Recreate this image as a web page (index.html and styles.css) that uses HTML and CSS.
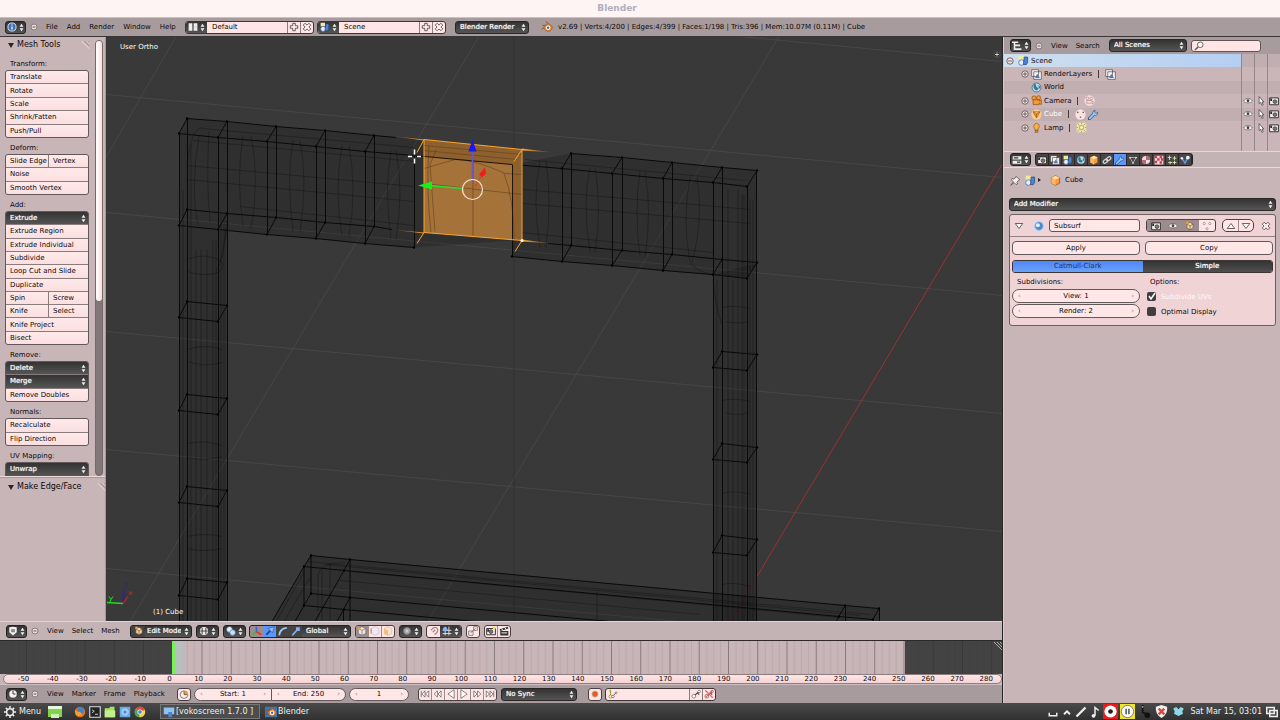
FILE: index.html
```html
<!DOCTYPE html>
<html lang="en">
<head>
<meta charset="utf-8">
<title>Blender</title>
<link rel="stylesheet" href="styles.css">
</head>
<body>
<svg class="sprite" aria-hidden="true">
  <symbol id="ud" viewBox="0 0 6 12"><path d="M3 1 5.600 5H.4zM3 11 .4 7h5.200z" fill="#f4f4f4"/></symbol>
  <symbol id="dot" viewBox="0 0 8 8"><circle cx="4" cy="4" r="3" fill="#eadcdc" stroke="#8a7c7e"/><path d="M2.500 4h3" stroke="#6b5f60"/></symbol>
  <symbol id="info" viewBox="0 0 16 16"><circle cx="8" cy="8" r="6.500" fill="#3f70b5" stroke="#dfe9f7" stroke-width="1.500"/><path d="M8 7v5M8 4v1.500" stroke="#fff" stroke-width="2"/></symbol>
  <symbol id="layout" viewBox="0 0 16 16"><path d="M1 2h6v12H1zM9 2h6v12H9z" fill="#f3eded"/><path d="M9 8h6" stroke="#bbb"/></symbol>
  <symbol id="scene" viewBox="0 0 16 16"><path d="M1 1h7v6H1z" fill="#eeee9a"/><circle cx="5" cy="11" r="4" fill="#e8f0fb" stroke="#3b5f96"/><path d="M9 3h5v8l-2 3H8z" fill="#4d83cf" stroke="#234577"/></symbol>
  <symbol id="plus" viewBox="0 0 16 16"><path d="M6 2h4v4h4v4h-4v4H6v-4H2V6h4z" fill="#fff2f2" stroke="#463d3e" stroke-width="1.300"/></symbol>
  <symbol id="cross" viewBox="0 0 16 16"><path d="M5 2 8 5l3-3 3 3-3 3 3 3-3 3-3-3-3 3-3-3 3-3-3-3z" fill="#fff2f2" stroke="#463d3e" stroke-width="1.300"/></symbol>
  <symbol id="blender" viewBox="0 0 16 16"><path d="M7 1 15 7a5.500 5.500 0 1 1-11 2L1 11l5-5H2l7-1z" fill="#ef8226" stroke="#8e4a14" stroke-width=".7"/><circle cx="9.500" cy="9" r="3" fill="#fff"/><circle cx="9.500" cy="9" r="1.600" fill="#3568a8"/></symbol>
  <symbol id="tree" viewBox="0 0 16 16"><path d="M0 2h10M4 2v11h11M4 7h9" stroke="#eee" stroke-width="2.500" fill="none"/></symbol>
  <symbol id="props" viewBox="0 0 16 16"><path d="M1 2h14v5H1zM1 9h14v5H1z" fill="#eee"/><path d="M3 4.500h7M8 11.500h5" stroke="#333" stroke-width="2"/></symbol>
  <symbol id="view3d" viewBox="0 0 16 16"><path d="M2 2 8 1l6 1v8l-6 5-6-5z" fill="#f2eded"/><path d="M5 5h6v5H5z" fill="#888"/></symbol>
  <symbol id="clock" viewBox="0 0 16 16"><circle cx="8" cy="8" r="6.500" fill="#f7f1f1" stroke="#4b4141"/><path d="M8 3v5h4" stroke="#333" stroke-width="1.500" fill="none"/></symbol>
  <symbol id="autoclock" viewBox="0 0 16 16"><circle cx="8" cy="9" r="6" fill="#f7f1f1" stroke="#4b4141"/><path d="M8 9V3a6 6 0 0 1 6 6z" fill="#f0a32c"/><path d="M8 4v5h5" stroke="#333" fill="none"/></symbol>
  <symbol id="lens" viewBox="0 0 16 16"><circle cx="10" cy="6" r="4.500" fill="#fff8f8" stroke="#665a5b" stroke-width="1.500"/><path d="m6.500 9.500-5 5" stroke="#665a5b" stroke-width="2.500"/></symbol>
  <symbol id="layers" viewBox="0 0 16 16"><path d="M1 1h10v10H1zM4 4h11v11H4z" fill="#faf6f6" stroke="#4d4546"/><path d="m6 13 3-6 4 6z" fill="#4e79b7"/></symbol>
  <symbol id="world" viewBox="0 0 16 16"><circle cx="8" cy="8" r="6.500" fill="#b9dcf2" stroke="#3b5566"/><path d="M5 3c4 0 1 4 4 5s1 5-2 4-5-7-2-9zM11 4l3 4-3 2z" fill="#367a8b"/></symbol>
  <symbol id="camera" viewBox="0 0 16 16"><circle cx="4.500" cy="4.500" r="3.200" fill="#f69a35" stroke="#8a4d12"/><circle cx="11" cy="4" r="3" fill="#f69a35" stroke="#8a4d12"/><path d="M3 7h9v2l3-2v7l-3-2v2H3z" fill="#f69a35" stroke="#8a4d12"/></symbol>
  <symbol id="camdata" viewBox="0 0 16 16"><circle cx="8" cy="8" r="7.500" fill="#f8dcdc"/><circle cx="5" cy="5" r="2" fill="none" stroke="#b18c8c"/><circle cx="10.500" cy="5" r="2" fill="none" stroke="#b18c8c"/><path d="M4 8h7v2l2-1v4l-2-1H4z" fill="none" stroke="#b18c8c"/></symbol>
  <symbol id="mesh" viewBox="0 0 16 16"><circle cx="8" cy="8" r="7.500" fill="#fbc98d"/><path d="M3 4h10l-5 9zM3 4l5 3 5-3M8 7v6" fill="#f69a35" stroke="#a85c10"/></symbol>
  <symbol id="tri" viewBox="0 0 16 16"><path d="M3 4h10l-5 9z" fill="none" stroke="#e7e2e2"/><path d="M2 3h2v2H2zM12 3h2v2h-2zM7 12h2v2H7z" fill="#fff"/></symbol>
  <symbol id="meshdata" viewBox="0 0 16 16"><circle cx="8" cy="8" r="7.500" fill="#f8e2e2"/><circle cx="4" cy="5" r="1.200" fill="#6c6060"/><circle cx="12" cy="5" r="1.200" fill="#6c6060"/><circle cx="8" cy="12" r="1.200" fill="#6c6060"/></symbol>
  <symbol id="cage" viewBox="0 0 16 16"><g fill="#fff" stroke="#7d7071"><circle cx="3.500" cy="4" r="1.800"/><circle cx="12.500" cy="4" r="1.800"/><circle cx="8" cy="12.500" r="1.800"/></g></symbol>
  <symbol id="wrench" viewBox="0 0 16 16"><path d="M2 14 8.500 7.500" stroke="#24548f" stroke-width="4.500" stroke-linecap="round"/><path d="M14 4.500A3.700 3.700 0 1 1 10.500 2L9.500 4.500l2 1.800z" fill="#a9cdf8" stroke="#24548f"/><path d="M2.500 13.500 8.500 7.500" stroke="#a9cdf8" stroke-width="2.500" stroke-linecap="round"/></symbol>
  <symbol id="lamp" viewBox="0 0 16 16"><path d="M4 6a4 4 0 1 1 8 0c0 3-2 3-2 6H6c0-3-2-3-2-6z" fill="#f8b048" stroke="#94591a"/><path d="M6 12h4v3H6z" fill="#d88a2f" stroke="#94591a"/></symbol>
  <symbol id="lampdata" viewBox="0 0 16 16"><path d="M1 1h14v14H1z" fill="#e9e5a0"/><circle cx="8" cy="8" r="3" fill="#f4f1c4" stroke="#98934b"/><path d="m2 2 3 3m6 6 3 3m0-12-3 3m-6 6-3 3M8 1v2M8 13v2M1 8h2M13 8h2" stroke="#98934b"/></symbol>
  <symbol id="eye" viewBox="0 0 16 16"><path d="M1 8c3-5 11-5 14 0-3 4-11 4-14 0z" fill="#fff" stroke="#544a4b"/><circle cx="8" cy="7.500" r="2.300" fill="#4b4243"/></symbol>
  <symbol id="cursor" viewBox="0 0 16 16"><path d="M5 1v11l2.500-2 2 5 2-1-2-4.500h3z" fill="#fff" stroke="#2b2627"/></symbol>
  <symbol id="photo" viewBox="0 0 16 16"><path d="M1 3h14v11H1z" fill="#f5eeee" stroke="#2f2a2b" stroke-width="1.500"/><circle cx="9.500" cy="9" r="3" fill="#777" stroke="#2f2a2b"/><path d="M2 4h3v4H2z" fill="#2f2a2b"/></symbol>
  <symbol id="cube" viewBox="0 0 16 16"><path d="m8 1 6 3v8l-6 3-6-3V4z" fill="#f59b3a" stroke="#8d4e12"/><path d="m2 4 6 3 6-3-6-3z" fill="#ffdca8"/><path d="M8 7v8l-6-3V4z" fill="#fbb766"/></symbol>
  <symbol id="editcube" viewBox="0 0 16 16"><path d="m8 2 5 3v6l-5 3-5-3V5z" fill="#f2d6ad" stroke="#6d4b22"/><path d="m3 5 5 3 5-3M8 8v6" stroke="#6d4b22" fill="none"/><path d="M2 1h4v4H2z" fill="#f29a3a"/></symbol>
  <symbol id="chain" viewBox="0 0 16 16"><g fill="none" stroke="#d6d6d6" stroke-width="2"><ellipse cx="5.500" cy="10" rx="4" ry="2.500" transform="rotate(-35 5.500 10)"/><ellipse cx="10.500" cy="6" rx="4" ry="2.500" transform="rotate(-35 10.500 6)"/></g></symbol>
  <symbol id="material" viewBox="0 0 16 16"><circle cx="8" cy="8" r="6.500" fill="#efdada"/><path d="M8 8V1.500A6.500 6.500 0 0 1 14.500 8zM8 8v6.500A6.500 6.500 0 0 1 1.500 8z" fill="#b66a70"/></symbol>
  <symbol id="texture" viewBox="0 0 16 16"><path d="M1 1h14v14H1z" fill="#f4dada"/><path d="M1 1h4v4H1zM9 1h4v4H9zM5 5h4v4H5zM11 5h4v4h-4zM1 9h4v4H1zM9 10h4v4H9z" fill="#c0424a"/></symbol>
  <symbol id="particles" viewBox="0 0 16 16"><path d="M4 1v7M1 4h6M12 2v6M9 5h6M5 10v5M2 12h6M12 9v6M9 12h6" stroke="#dbe6a8" stroke-width="1.500"/></symbol>
  <symbol id="physics" viewBox="0 0 16 16"><path d="m3 5 5 8 4-8" fill="none" stroke="#5d9adb" stroke-width="2.500"/><circle cx="3" cy="5" r="2" fill="#e8f2fc"/><circle cx="12.500" cy="4" r="3" fill="#e8f2fc"/></symbol>
  <symbol id="pin" viewBox="0 0 16 16"><path d="m9 2 5 5-2 1-2 3 1 2-2 1-3-3-5 4 4-5-3-3 1-2 2 1 3-2z" fill="#f5eded" stroke="#443b3c"/></symbol>
  <symbol id="subsurf" viewBox="0 0 16 16"><circle cx="8" cy="8" r="7" fill="#c9def7"/><circle cx="8" cy="8" r="5.500" fill="#4e88cf" stroke="#8fb5e6"/><circle cx="6.500" cy="7" r="2.700" fill="#e2effc"/></symbol>
  <symbol id="up" viewBox="0 0 16 16"><path d="m2 12 6-8 6 8z" fill="#fff" stroke="#4a4142" stroke-width="1.300"/></symbol>
  <symbol id="down" viewBox="0 0 16 16"><path d="m2 4 6 8 6-8z" fill="#fff" stroke="#4a4142" stroke-width="1.300"/></symbol>
  <symbol id="globe" viewBox="0 0 16 16"><circle cx="8" cy="8" r="6.500" fill="#f1eded"/><path d="M5 3v10M11 3v10M2 8h12" stroke="#3a3a3a" stroke-width="1.500"/></symbol>
  <symbol id="pivot" viewBox="0 0 16 16"><circle cx="5.500" cy="5.500" r="4.500" fill="#e8f1fc" stroke="#4a76af"/><circle cx="10.500" cy="10.500" r="4.500" fill="#c9dff8" stroke="#4a76af"/></symbol>
  <symbol id="axes" viewBox="0 0 16 16"><path d="M7 1v9" stroke="#3069d8" stroke-width="2.500"/><path d="m7 9-6 5" stroke="#49b03a" stroke-width="3"/><path d="m7 9 8 5" stroke="#dc3a32" stroke-width="3"/></symbol>
  <symbol id="arrow" viewBox="0 0 16 16"><path d="m2 14 8-8" stroke="#1d4d98" stroke-width="3"/><path d="M15 1 12 11 5 4z" fill="#8fbcff" stroke="#1d4d98"/></symbol>
  <symbol id="arc" viewBox="0 0 16 16"><path d="M2 15Q3 4 14 3" stroke="#a5c8fa" stroke-width="3" fill="none"/></symbol>
  <symbol id="scale" viewBox="0 0 16 16"><path d="m2 15 8-9" stroke="#86b1f1" stroke-width="2.500"/><path d="M8 2h6v6H8z" fill="#86b1f1"/></symbol>
  <symbol id="vsel" viewBox="0 0 16 16"><path d="m8 1 6 3v8l-6 3-6-3V4z" fill="#ece6e0" stroke="#6c625f"/><path d="m2 4 6 3 6-3M8 7v8" stroke="#6c625f" fill="none"/><circle cx="3" cy="4" r="2.500" fill="#f29a3a"/></symbol>
  <symbol id="esel" viewBox="0 0 16 16"><path d="m8 1 6 3v8l-6 3-6-3V4z" fill="#ede9f6" stroke="#c5b5c8"/><path d="M2 4v8" stroke="#f29a3a" stroke-width="2.500"/></symbol>
  <symbol id="fsel" viewBox="0 0 16 16"><path d="m8 1 6 3v8l-6 3-6-3V4z" fill="#f8e5cc" stroke="#d0b5a0"/><path d="m2 4 6 3v8l-6-3z" fill="#f7bb77"/></symbol>
  <symbol id="prop" viewBox="0 0 16 16"><circle cx="8" cy="8" r="5.500" fill="#aaa" stroke="#777" stroke-width="1.500"/><circle cx="8" cy="8" r="2" fill="#ccc"/></symbol>
  <symbol id="magnet" viewBox="0 0 16 16"><path d="m3 7 4-4q4-2 6 1t0 6l-4 4M6 10l4-4" stroke="#a18b8c" stroke-width="2" fill="none"/></symbol>
  <symbol id="snap" viewBox="0 0 16 16"><path d="M5 1v14M11 1v14M1 7h14M1 12h14" stroke="#dedede" stroke-width="1.500"/><circle cx="5" cy="5" r="3.500" fill="#85b6f7"/></symbol>
  <symbol id="link" viewBox="0 0 16 16"><path d="M9 1h6v6H9zM1 8h7v7H1z" fill="#f4ece2" stroke="#5c5152"/><path d="M4 11 12 4" stroke="#5c5152"/></symbol>
  <symbol id="photosun" viewBox="0 0 16 16"><path d="M1 4h14v10H1z" fill="#f5eeee" stroke="#2f2a2b" stroke-width="1.500"/><circle cx="8" cy="9" r="3" fill="#777" stroke="#2f2a2b"/><path d="M2 5h3v4H2z" fill="#2f2a2b"/><path d="M11 1h4v4h-4z" fill="#f4e23c"/></symbol>
  <symbol id="clap" viewBox="0 0 16 16"><path d="m1 5 13-4 1 3-13 4zM2 8h13v7H2z" fill="#333"/><path d="m4 4 2 3M9 2l2 3M4 11h9" stroke="#fff" stroke-width="1.500"/></symbol>
  <symbol id="start" viewBox="0 0 16 16"><path d="M2 3v10M8 3 3 8l5 5zM14 3 9 8l5 5z" fill="#fff" stroke="#493f40"/></symbol>
  <symbol id="prev" viewBox="0 0 16 16"><path d="M7 3 2 8l5 5zM13 3 8 8l5 5z" fill="#fff" stroke="#493f40"/></symbol>
  <symbol id="back" viewBox="0 0 16 16"><path d="M13 1 3 8l10 7z" fill="#fff" stroke="#493f40"/></symbol>
  <symbol id="key" viewBox="0 0 16 16"><path d="m6 10 7-6M10 6l3 3" stroke="#5a4f50" stroke-width="2"/><circle cx="4.500" cy="11.500" r="3" fill="#fff" stroke="#5a4f50"/><circle cx="13" cy="4" r="2" fill="#fff" stroke="#5a4f50"/></symbol>
  <symbol id="keyset" viewBox="0 0 16 16"><path d="M4 1v9M2 3h3" stroke="#a8a83c" stroke-width="2"/><circle cx="4" cy="12" r="2.500" fill="#f6f3c0" stroke="#7d7d34"/><path d="m8 11 5-5" stroke="#5a4f50" stroke-width="1.500"/><circle cx="8" cy="12" r="2" fill="#fff" stroke="#5a4f50"/><circle cx="13" cy="6" r="1.500" fill="#fff" stroke="#5a4f50"/></symbol>
  <symbol id="exp" viewBox="0 0 10 10"><circle cx="5" cy="5" r="4" fill="#f6e6e6" stroke="#504647"/><path d="M2.500 5h5M5 2.500v5" stroke="#504647"/></symbol>
  <symbol id="col" viewBox="0 0 10 10"><circle cx="5" cy="5" r="4" fill="#f6e6e6" stroke="#504647"/><path d="M2.500 5h5" stroke="#504647"/></symbol>
</svg>

<div class="app">
  <header class="titlebar">Blender</header>

  <div class="bar infobar">
    <button class="ico drop" aria-label="Editor type"><svg><use href="#info"/></svg><svg class="ud"><use href="#ud"/></svg></button>
    <svg class="dot"><use href="#dot"/></svg>
    <nav class="menus infomenus"><button>File</button><button>Add</button><button>Render</button><button>Window</button><button>Help</button></nav>
    <div class="idblock">
      <button class="ico drop" aria-label="Browse screens"><svg><use href="#layout"/></svg><svg class="ud"><use href="#ud"/></svg></button>
      <input class="wide" value="Default" aria-label="Screen"><button class="cell" aria-label="Add screen"><svg><use href="#plus"/></svg></button><button class="cell" aria-label="Delete screen"><svg><use href="#cross"/></svg></button>
    </div>
    <div class="idblock">
      <button class="ico drop" aria-label="Browse scenes"><svg><use href="#scene"/></svg><svg class="ud"><use href="#ud"/></svg></button>
      <input class="wide" value="Scene" aria-label="Scene"><button class="cell" aria-label="Add scene"><svg><use href="#plus"/></svg></button><button class="cell" aria-label="Delete scene"><svg><use href="#cross"/></svg></button>
    </div>
    <select class="sel engine" aria-label="Render engine"><option>Blender Render</option></select>
    <svg class="logo"><use href="#blender"/></svg>
    <span class="stats">v2.69 | Verts:4/200 | Edges:4/399 | Faces:1/198 | Tris:396 | Mem:10.07M (0.11M) | Cube</span>
  </div>

  <div class="work">
    <div class="left">
      <div class="upper">
        <aside class="shelf">
          <div class="tools">
            <div class="toolcol">
              <h2 class="phead"><span class="tri"></span>Mesh Tools<i class="grip"></i></h2>
              <h3>Transform:</h3>
              <div class="group g5"><button>Translate</button><button>Rotate</button><button>Scale</button><button>Shrink/Fatten</button><button>Push/Pull</button></div>
              <h3>Deform:</h3>
              <div class="group g3"><button class="half">Slide Edge</button><button class="half">Vertex</button><button>Noise</button><button>Smooth Vertex</button></div>
              <h3>Add:</h3>
              <div class="group g10"><select class="sel" aria-label="Extrude"><option>Extrude</option></select><button>Extrude Region</button><button>Extrude Individual</button><button>Subdivide</button><button>Loop Cut and Slide</button><button>Duplicate</button><button class="half">Spin</button><button class="half">Screw</button><button class="half">Knife</button><button class="half">Select</button><button>Knife Project</button><button>Bisect</button></div>
              <h3>Remove:</h3>
              <div class="group g3"><select class="sel" aria-label="Delete"><option>Delete</option></select><select class="sel" aria-label="Merge"><option>Merge</option></select><button>Remove Doubles</button></div>
              <h3>Normals:</h3>
              <div class="group g2"><button>Recalculate</button><button>Flip Direction</button></div>
              <h3>UV Mapping:</h3>
              <div class="group g2"><select class="sel" aria-label="Unwrap"><option>Unwrap</option></select><button aria-label="More"></button></div>
            </div>
            <div class="scroll"><div class="thumb"></div></div>
          </div>
          <div class="operator"><h2 class="phead"><span class="tri"></span>Make Edge/Face<i class="grip"></i></h2></div>
        </aside>

        <main class="viewport">
          <svg class="canvas" viewBox="106 37 896 585" preserveAspectRatio="xMidYMid slice" aria-label="3D view">
            <defs>
              <linearGradient id="fl" x1="0" x2="1"><stop offset="0" stop-color="#ffa428" stop-opacity="0"/><stop offset="1" stop-color="#ffa428"/></linearGradient>
              <linearGradient id="fr" x1="0" x2="1"><stop offset="0" stop-color="#ffa428"/><stop offset="1" stop-color="#ffa428" stop-opacity="0"/></linearGradient>
            </defs>
            <g stroke="#474747" fill="none">
              <path d="M740 37 1002 62M106 95 1002 178M106 213 1002 296M106 332 1002 414M106 450 1002 532M106 569 680 622M176 37 106 158M479 37 130 622M779 37 428 622"/>
              <path d="M514 37V622" stroke="#323232"/>
            </g>
            <path d="M1002 165 757 577" stroke="#9c3036" fill="none"/>
            <path d="M757 577 731 622" stroke="#55282a" fill="none"/>
            <g fill="#000" fill-opacity=".17">
              <path d="M187 119 423 140 512 165 571 154 757 171 756 264 747 279 512 257V241L414 248 227 231 179 226V134z"/>
              <path d="M179 226 227 230V622H179zM713 275 756 264V622H713z"/>
              <path d="M311 556 879 609V622H272L304 567z"/>
            </g>
            <g stroke="#000" stroke-opacity=".26" fill="none">
              <path d="M183 190V622M191 145V622M196 250V622M201 250V622M207 250V622M213 240V622M216 240V622M221 215V622M224 215V622"/>
              <path d="M717 280V622M728 190V622M733 280V622M738 190V622M742 195V622M744 195V622M750 200V622M753 200V622"/>
              <path d="M187 166 414 187M187 180 414 202M193 141 414 162M202 129 414 148M240 207 414 226M512 189 750 210M512 203 750 224M525 160 745 181M512 232 713 253"/>
              <path d="M187 170Q190 128 203 128M199 136Q190 190 198 226M209 132Q206 180 210 222M243 136Q236 180 243 227M251 136Q260 180 251 229M293 140Q286 180 293 232M300 141Q308 180 300 233M342 146Q334 190 342 236M349 146Q357 190 349 237M391 151Q384 190 391 239M396 151Q404 190 396 240M540 161Q532 200 540 248M546 161Q552 200 546 248M590 168Q582 200 590 253M595 168Q602 210 595 253M640 172Q634 210 640 257M645 172Q652 210 645 258M690 178Q682 220 690 263Q700 274 713 275M697 178Q704 220 692 263"/>
              <path d="M227 220Q222 265 216 272M227 228 222 260M187 260Q205 252 222 262Q226 275 205 275 190 275 187 270M187 350Q205 344 222 350M187 362Q205 368 222 363M187 444Q205 440 222 446M187 458Q205 462 222 457M187 537Q205 533 222 537M187 549Q205 553 222 549M713 280Q716 310 722 325M722 308Q735 305 750 309M725 322Q738 325 748 322M722 401Q735 398 750 402M725 413Q738 417 748 413M722 494Q735 490 750 495M722 585Q735 582 750 587"/>
              <path d="M308 562 870 615M325 565 860 616M340 581 700 615M352 572 840 618M318 612 318 575Q320 563 345 563M330 622V564M322 622V567M304 573 276 622M310 578 284 622M597 592V622"/>
            </g>
            <g stroke="#090909" fill="none">
              <path d="M187 119 227 122 276 127 325 131 374 136 396 138M179 134 218 138 267 142 316 147 365 152 414 156 512 165 562 169 612 174 663 179 713 183 747 187M571 154 622 158 672 163 722 168 757 171"/>
              <path d="M187 210 227 214 276 218 325 223 374 227 392 230M179 226 218 230 267 235 316 239 365 244 414 248M512 257 562 262 612 266 663 271 713 275 747 279 757 263 722 260 672 255 622 251 571 246 548 244"/>
              <path d="M187 119 179 134M227 122 218 138M276 127 267 142M325 131 316 147M374 136 365 152M571 154 562 169M622 158 612 174M672 163 663 179M722 168 713 183M757 171 747 187M187 210 179 226M227 214 218 230M276 218 267 235M325 223 316 239M374 227 365 244M571 246 562 262M622 251 612 266M672 255 663 271M722 260 713 275"/>
              <path d="M179.500 134V622M187.500 119V622M218.500 138V622M227.500 122V622M267.500 142V235M276.500 127V218M316.500 147V239M325.500 131V223M365.500 152V244M374.500 136V227M414.500 156V248M512.500 165V257M562.500 169V262M571.500 154V246M612.500 174V266M622.500 158V251M663.500 179V271M672.500 163V255M713.500 183V622M722.500 168V622M747.500 187V622M756.500 171V622"/>
              <path d="M187 302 227 306 218 322 179 318zM187 395 227 399 218 415 179 411zM187 487 227 491 218 507 179 503zM187 579 227 583 218 600 179 596zM722 352 757 355 747 371 713 368zM722 444 757 448 747 463 713 460zM722 536 757 540 747 556 713 553z"/>
              <path d="M311 556 350 560 845 606 879 609 873 620 839 617 344 571 304 567 311 556M272 622 304 567V606L344 610 475 622M311 556V594L350 598 610 622M350 560V622M350 560 344 571 315 622M311 594 304 606 295 622M350 598 337 622M343.500 610V622M845.500 606V622M845 606 836 622M879.500 609V622"/>
            </g>
            <g stroke="#000" stroke-width="2.500" stroke-linecap="round">
              <path d="M187 119h0M227 122h0M276 127h0M325 131h0M374 136h0M179 134h0M218 138h0M267 142h0M316 147h0M365 152h0M187 210h0M227 214h0M276 218h0M325 223h0M374 227h0M179 226h0M218 230h0M267 235h0M316 239h0M365 244h0M414 248h0M512 165h0M562 169h0M612 174h0M663 179h0M713 183h0M747 187h0M571 154h0M622 158h0M672 163h0M722 168h0M757 171h0M512 257h0M562 262h0M612 266h0M663 271h0M713 275h0M747 279h0M757 263h0M722 260h0M672 255h0M622 251h0M571 246h0"/>
              <path d="M187 302h0M227 306h0M218 322h0M179 318h0M187 395h0M227 399h0M218 415h0M179 411h0M187 487h0M227 491h0M218 507h0M179 503h0M187 579h0M227 583h0M218 600h0M179 596h0M722 352h0M757 355h0M747 371h0M713 368h0M722 444h0M757 448h0M747 463h0M713 460h0M722 536h0M757 540h0M747 556h0M713 553h0M311 556h0M350 560h0M304 567h0M344 571h0M311 594h0M350 598h0M304 606h0M344 610h0M845 606h0M879 609h0M873 620h0M839 617h0"/>
            </g>
            <path d="M424 140 522 150V241L424 233z" fill="#a5723a"/>
            <path d="M424 140 522 150V241L512 240V165L424 157z" fill="#7f5526" fill-opacity=".6"/>
            <g stroke="#5c3c18" stroke-opacity=".55" fill="none"><path d="M424 146 522 155M424 151 517 160M424 169 455 160Q475 160 505 174L522 175M424 184 522 195M429 146Q426 190 431 233M430 165 435 232M504 174Q514 200 514 240M473 160V236M436 150 430 165"/></g>
            <path d="M414 156 512 165" stroke="#1d1308" fill="none"/><path d="M512.500 165V241" stroke="#1d1308" fill="none"/>
            <path d="M424 140 522 150V241L424 233zM522 150 514 162M424 140 417 153M424 233 417 244M522 241 515 252" stroke="#ffa428" fill="none"/>
            <path d="M395 137h1L424 140v1zM390 230 424 233v1z" fill="url(#fl)"/>
            <path d="M522 149 554 153 522 151zM522 240 552 244 522 242z" fill="url(#fr)"/>
            <circle cx="522" cy="241" r="1.500" fill="#fff"/>
            <path d="M472.500 150V181" stroke="#6957c9" stroke-width="1.500"/><path d="m472.500 140 4 12h-8z" fill="#1616fa"/>
            <path d="m463 189-35-3" stroke="#25e02d" stroke-width="1.500"/><path d="m418 186 14-4v8z" fill="#12f21c"/>
            <path d="m475 187 6-10" stroke="#dd3327" stroke-dasharray="3 1"/><path d="m485 168 1 6-4 4-3-3z" fill="#f71818"/>
            <circle cx="472.500" cy="190" r="10" fill="none" stroke="#f4dfca" stroke-width="1.200"/>
            <path d="M414.500 150v5M414.500 159v5M408 157h4M417 157h4" stroke="#fff" stroke-width="1.500"/>
            <path d="M123.500 604V590" stroke="#1d1dda" stroke-width="1.500"/><path d="m123 604-16-1" stroke="#1edc26" stroke-width="1.500"/><path d="m123 604 5-7M129 595l3-3M129 592l3 3" stroke="#b32323" stroke-width="1.500"/><path d="m125 584 3 0-3 4h3" stroke="#2424b0" fill="none"/><path d="m109 597 2 3 2-3m-2 3-1 3" stroke="#1edc26" fill="none"/>
            <circle cx="997" cy="55" r="3" fill="#222" stroke="#555"/><path d="M995 55h4M997 53v4" stroke="#ccc"/>
          </svg>
          <span class="vlabel vtop">User Ortho</span>
          <span class="vlabel vbottom">(1) Cube</span>
        </main>
      </div>

      <div class="bar light viewbar">
        <button class="ico drop" aria-label="Editor type"><svg><use href="#view3d"/></svg><svg class="ud"><use href="#ud"/></svg></button>
        <svg class="dot"><use href="#dot"/></svg>
        <nav class="menus viewmenus"><button>View</button><button>Select</button><button>Mesh</button></nav>
        <div class="mode"><svg><use href="#editcube"/></svg><select class="sel" aria-label="Mode"><option>Edit Mode</option></select></div>
        <button class="ico drop" aria-label="Shading"><svg><use href="#globe"/></svg><svg class="ud"><use href="#ud"/></svg></button>
        <button class="ico drop" aria-label="Pivot"><svg><use href="#pivot"/></svg><svg class="ud"><use href="#ud"/></svg></button>
        <div class="manip"><button class="grey" aria-label="Manipulator"><svg><use href="#axes"/></svg></button><button class="on" aria-label="Translate"><svg><use href="#arrow"/></svg></button><button aria-label="Rotate"><svg><use href="#arc"/></svg></button><button aria-label="Scale"><svg><use href="#scale"/></svg></button><select class="sel" aria-label="Orientation"><option>Global</option></select></div>
        <div class="strip"><button class="grey" aria-label="Vertex select"><svg><use href="#vsel"/></svg></button><button aria-label="Edge select"><svg><use href="#esel"/></svg></button><button aria-label="Face select"><svg><use href="#fsel"/></svg></button></div>
        <button class="ico drop" aria-label="Proportional editing"><svg><use href="#prop"/></svg><svg class="ud"><use href="#ud"/></svg></button>
        <div class="idblock"><button class="cell" aria-label="Snap"><svg><use href="#magnet"/></svg></button><button class="ico drop" aria-label="Snap element"><svg><use href="#snap"/></svg><svg class="ud"><use href="#ud"/></svg></button></div>
        <div class="strip"><button aria-label="Auto merge"><svg><use href="#link"/></svg></button></div>
        <div class="strip"><button aria-label="Render view"><svg><use href="#photosun"/></svg></button><button aria-label="Render animation"><svg><use href="#clap"/></svg></button></div>
      </div>

      <section class="timeline">
        <svg class="frames" viewBox="0 0 1002 33" preserveAspectRatio="none" aria-hidden="true">
          <defs><pattern id="ticks" x="26" width="29.250" height="33" patternUnits="userSpaceOnUse"><path d="M.5 0V33" stroke="#000" stroke-opacity=".32"/><path d="M8 0V33M15 0V33M22 0V33" stroke="#000" stroke-opacity=".07"/></pattern></defs>
          <path d="M0 0H1002V33H0z" fill="#434343"/><path d="M172 0H905V33H172z" fill="#c8b5b7"/>
          <path d="M172 0H905V33H172z" fill="url(#ticks)"/>
          <path d="M0 0H172V33H0zM905 0h97v33h-97z" fill="url(#ticks)" opacity=".45"/>
          <path d="M175 0h8v33h-8z" fill="#b7bfc0"/><path d="M172 0h3v33h-3z" fill="#7cf05c"/><path d="m994 1 8 8M997 1l5 5M1000 1l2 2" stroke="#aaa"/>
        </svg>
        <div class="numbers"><span>-50</span><span>-40</span><span>-30</span><span>-20</span><span>-10</span><span>0</span><span>10</span><span>20</span><span>30</span><span>40</span><span>50</span><span>60</span><span>70</span><span>80</span><span>90</span><span>100</span><span>110</span><span>120</span><span>130</span><span>140</span><span>150</span><span>160</span><span>170</span><span>180</span><span>190</span><span>200</span><span>210</span><span>220</span><span>230</span><span>240</span><span>250</span><span>260</span><span>270</span><span>280</span></div>
      </section>

      <div class="bar timebar">
        <button class="ico drop" aria-label="Editor type"><svg><use href="#clock"/></svg><svg class="ud"><use href="#ud"/></svg></button>
        <svg class="dot"><use href="#dot"/></svg>
        <nav class="menus timemenus"><button>View</button><button>Marker</button><button>Frame</button><button>Playback</button></nav>
        <div class="strip"><button aria-label="Preview range"><svg><use href="#autoclock"/></svg></button></div>
        <div class="range"><label class="num"><input value="Start: 1" aria-label="Start frame"></label><label class="num"><input value="End: 250" aria-label="End frame"></label></div>
        <label class="num current"><input value="1" aria-label="Current frame"></label>
        <div class="strip play"><button aria-label="First frame"><svg><use href="#start"/></svg></button><button aria-label="Previous key"><svg><use href="#prev"/></svg></button><button aria-label="Play back"><svg><use href="#back"/></svg></button><button class="flip" aria-label="Play"><svg><use href="#back"/></svg></button><button class="flip" aria-label="Next key"><svg><use href="#prev"/></svg></button><button class="flip" aria-label="Last frame"><svg><use href="#start"/></svg></button></div>
        <select class="sel sync" aria-label="Sync"><option>No Sync</option></select>
        <div class="strip rec"><button aria-label="Record"><svg viewBox="0 0 16 16"><circle cx="8" cy="8" r="5" fill="#ec5a1d" stroke="#a9d3dc"/></svg></button></div>
        <div class="idblock keys"><button class="cell" aria-label="Keying set"><svg><use href="#keyset"/></svg></button><input aria-label="Active keying set"><button class="cell" aria-label="Insert key"><svg><use href="#key"/></svg></button><button class="cell" aria-label="Delete key"><svg viewBox="0 0 16 16"><use href="#key"/><path d="m2 2 12 12M14 2 2 14" stroke="#e2666a" stroke-width="2"/></svg></button></div>
      </div>
    </div>

    <aside class="right">
      <div class="bar outbar">
        <button class="ico drop" aria-label="Editor type"><svg><use href="#tree"/></svg><svg class="ud"><use href="#ud"/></svg></button>
        <svg class="dot"><use href="#dot"/></svg>
        <nav class="menus outmenus"><button>View</button><button>Search</button></nav>
        <select class="sel scenes" aria-label="Display mode"><option>All Scenes</option></select>
        <label class="search"><svg><use href="#lens"/></svg><input aria-label="Filter"></label>
      </div>
      <div class="outliner">
        <div class="row scene"><div class="name l0"><svg class="ex"><use href="#col"/></svg><svg><use href="#scene"/></svg>Scene</div><b></b><b></b><b></b></div>
        <div class="row"><div class="name l1"><svg class="ex"><use href="#exp"/></svg><svg><use href="#layers"/></svg>RenderLayers<i></i><svg><use href="#layers"/></svg></div><b></b><b></b><b></b></div>
        <div class="row"><div class="name l2"><svg><use href="#world"/></svg>World</div><b></b><b></b><b></b></div>
        <div class="row"><div class="name l1"><svg class="ex"><use href="#exp"/></svg><svg><use href="#camera"/></svg>Camera<i></i><svg><use href="#camdata"/></svg></div><b><svg><use href="#eye"/></svg></b><b><svg><use href="#cursor"/></svg></b><b><svg><use href="#photo"/></svg></b></div>
        <div class="row"><div class="name l1 picked"><svg class="ex"><use href="#exp"/></svg><svg><use href="#mesh"/></svg>Cube<i></i><svg><use href="#meshdata"/></svg><svg><use href="#wrench"/></svg></div><b><svg><use href="#eye"/></svg></b><b><svg><use href="#cursor"/></svg></b><b><svg><use href="#photo"/></svg></b></div>
        <div class="row"><div class="name l1"><svg class="ex"><use href="#exp"/></svg><svg><use href="#lamp"/></svg>Lamp<i></i><svg><use href="#lampdata"/></svg></div><b><svg><use href="#eye"/></svg></b><b><svg><use href="#cursor"/></svg></b><b><svg><use href="#photo"/></svg></b></div>
        <div class="row"><div class="name"></div><b></b><b></b><b></b></div>
      </div>
      <div class="bar light propbar">
        <button class="ico drop" aria-label="Editor type"><svg><use href="#props"/></svg><svg class="ud"><use href="#ud"/></svg></button>
        <div class="tabs"><button aria-label="Render"><svg><use href="#photo"/></svg></button><button aria-label="Render layers"><svg><use href="#layers"/></svg></button><button aria-label="Scene"><svg><use href="#scene"/></svg></button><button aria-label="World"><svg><use href="#world"/></svg></button><button aria-label="Object"><svg><use href="#cube"/></svg></button><button aria-label="Constraints"><svg><use href="#chain"/></svg></button><button class="on" aria-label="Modifiers"><svg><use href="#wrench"/></svg></button><button aria-label="Data"><svg><use href="#tri"/></svg></button><button aria-label="Material"><svg><use href="#material"/></svg></button><button aria-label="Texture"><svg><use href="#texture"/></svg></button><button aria-label="Particles"><svg><use href="#particles"/></svg></button><button aria-label="Physics"><svg><use href="#physics"/></svg></button></div>
      </div>
      <div class="props">
        <div class="crumbs"><svg><use href="#pin"/></svg><svg><use href="#scene"/></svg><span class="caret"></span><svg><use href="#cube"/></svg>Cube</div>
        <select class="sel addmod" aria-label="Add Modifier"><option>Add Modifier</option></select>
        <section class="modifier">
          <div class="modhead">
            <svg><use href="#down"/></svg><svg class="subs"><use href="#subsurf"/></svg>
            <input value="Subsurf" aria-label="Modifier name">
            <div class="strip"><button class="grey" aria-label="Use in render"><svg><use href="#photo"/></svg></button><button class="grey" aria-label="Show in view"><svg><use href="#eye"/></svg></button><button class="grey" aria-label="Show in edit mode"><svg><use href="#editcube"/></svg></button><button aria-label="On cage"><svg><use href="#cage"/></svg></button></div>
            <div class="strip round"><button aria-label="Move up"><svg><use href="#up"/></svg></button><button aria-label="Move down"><svg><use href="#down"/></svg></button></div>
            <button class="close" aria-label="Remove modifier"><svg><use href="#cross"/></svg></button>
          </div>
          <div class="modbody">
            <div class="pair"><button class="btn">Apply</button><button class="btn">Copy</button></div>
            <div class="toggle"><button class="on">Catmull-Clark</button><button>Simple</button></div>
            <div class="pair fields">
              <div class="col"><h3>Subdivisions:</h3><label class="num"><input value="View: 1" aria-label="View"></label><label class="num"><input value="Render: 2" aria-label="Render"></label></div>
              <div class="col"><h3>Options:</h3><label class="check pale"><input type="checkbox" checked>Subdivide UVs</label><label class="check"><input type="checkbox">Optimal Display</label></div>
            </div>
          </div>
        </section>
      </div>
    </aside>
  </div>

  <footer class="taskbar">
    <button class="start"><svg viewBox="0 0 16 16"><circle cx="8" cy="8" r="4.500" fill="none" stroke="#eee" stroke-width="2"/><path d="M8 0v3M8 13v3M0 8h3M13 8h3m-13.500-5.500 2 2m7 7 2 2m0-11-2 2m-7 7-2 2" stroke="#eee" stroke-width="2"/></svg>Menu</button>
    <svg class="desk" viewBox="0 0 16 13"><path d="M1 1h14v11H1z" fill="#7fd44a"/><path d="M1 1h14v3H1z" fill="#e8f6dc"/><path d="M4 9h8v4H4z" fill="#d2eec0"/></svg>
    <div class="launch">
      <svg viewBox="0 0 16 16"><circle cx="8" cy="8" r="7" fill="#e86f1d"/><circle cx="9" cy="6" r="4.500" fill="#3f83c8"/><path d="M1 5q3 3 7 3l3 3q-3 4-8 1z" fill="#f9a12e"/></svg>
      <svg viewBox="0 0 16 16"><path d="M1 1h14v14H1z" fill="#222" stroke="#ddd" stroke-width="1.500"/><path d="m4 5 3 2-3 2M8 11h4" stroke="#fff" fill="none"/></svg>
      <svg viewBox="0 0 16 16"><path d="M1 3h6l1-2h6v14H1z" fill="#a5e26a"/><path d="M1 6h14v9H1z" fill="#c3f08d"/></svg>
      <svg viewBox="0 0 16 16"><path d="M1 1h14v14H1z" fill="#6ba6e5"/><circle cx="8" cy="8" r="5" fill="#9ec9f4"/><circle cx="8" cy="8" r="2" fill="#4d86c8"/></svg>
      <svg viewBox="0 0 16 16"><circle cx="8" cy="8" r="7" fill="#f6d23b"/><path d="M8 8 2 4a7 7 0 0 1 12.500 1z" fill="#e0463a"/><path d="m8 8-6-4a7 7 0 0 0 5 11z" fill="#49a94d"/><circle cx="8" cy="8" r="3" fill="#4485ea" stroke="#fff"/></svg>
    </div>
    <button class="task lit"><svg viewBox="0 0 16 16"><path d="M1 2h14v9H1z" fill="#8ec2f3"/><path d="M7 8h5v7H7z" fill="#4b87c8"/></svg>[vokoscreen 1.7.0 ]</button>
    <button class="task"><svg viewBox="0 0 16 16"><path d="M0 1h16v14H0z" fill="#3d75b5"/><use href="#blender"/></svg>Blender</button>
    <div class="tray">
      <svg viewBox="0 0 16 16"><path d="M3 9v4h10V9" stroke="#eee" stroke-width="2" fill="none"/></svg>
      <svg viewBox="0 0 16 16"><path d="m4 11 4-4 4 4" stroke="#eee" stroke-width="2.500" fill="none"/></svg>
      <svg viewBox="0 0 16 16"><path d="m2 14 12-12" stroke="#eee" stroke-width="3"/></svg>
      <svg viewBox="0 0 16 16"><path d="M8 13V2l5 4" stroke="#eee" stroke-width="2" fill="none"/><circle cx="6" cy="13" r="2.500" fill="#eee"/></svg>
      <svg class="big" viewBox="0 0 16 16"><path d="M0 0h16v16H0z" fill="#e71c1c"/><circle cx="8" cy="8" r="6.500" fill="#fff"/><circle cx="8" cy="8" r="2.500" fill="#222"/></svg>
      <svg class="big" viewBox="0 0 16 16"><path d="M0 0h16v16H0z" fill="#efe52c"/><circle cx="8" cy="8" r="6.500" fill="#fff" stroke="#777"/><path d="M6.500 5v6M9.500 5v6" stroke="#444" stroke-width="1.500"/></svg>
      <svg class="big" viewBox="0 0 16 16"><path d="M6 1v8l5 2" stroke="#151515" stroke-width="2" fill="none"/><circle cx="11" cy="12" r="3" fill="#111"/><circle cx="6" cy="3" r="1" fill="#aaa"/></svg>
      <svg class="big" viewBox="0 0 16 16"><path d="m8 1 6 2q1 8-6 12Q1 11 2 3z" fill="#f4ecec"/><path d="m5 5 6 6m0-6-6 6" stroke="#d94545" stroke-width="2.500"/></svg>
      <svg class="big" viewBox="0 0 20 20"><path d="m3 6 4-2 3 3 3-3 4 2-2 4 1 3-6 3-6-3 1-3z" fill="#8fd8ea"/></svg>
      <time>Sat Mar 15, 03:01</time>
      <svg viewBox="0 0 16 16"><path d="M1 2h10v8H1zM5 6h10v8H5z" fill="#444" stroke="#eee" stroke-width="2"/></svg>
    </div>
  </footer>
</div>
</body>
</html>
```
FILE: styles.css
```css
* { box-sizing: border-box; }
body { margin: 0; }
body, button, input, select { font: 7px/12px "DejaVu Sans", sans-serif; color: #0c0809; }
button, input, select { margin: 0; padding: 0; border: 0; background: none; border-radius: 0; min-width: 0; outline: none; }
h2, h3 { margin: 0; font: inherit; }
svg { display: block; flex: none; width: 10px; height: 10px; }
.sprite { position: absolute; width: 0; height: 0; }

.app { display: flex; flex-direction: column; height: 100vh; min-height: 500px; overflow: hidden; background: #c8b5b7; }
.titlebar { height: 17px; padding-right: 46px; background: #fff4f4; color: #aeb0be; font-size: 9px; line-height: 17px; font-weight: bold; text-align: center; flex: none; }

/* editor headers */
.bar { display: flex; align-items: center; flex: none; height: 19px; padding-left: 6px; background: #a89b9d; border-top: 1px solid #cdbfc1; white-space: nowrap; overflow: hidden; }
.bar.light { background: #c4b3b5; border-top-color: #e6d5d6; }
.bar > * { flex: none; }
.dot { width: 8px; height: 8px; margin: 0 8px 0 4px; }
.menus { display: flex; gap: 8px; }
.ico { display: flex; align-items: center; justify-content: center; gap: 2px; height: 13px; width: 21px; background: linear-gradient(#333, #555); border: 1px solid #222; border-radius: 3px; }
.ud { width: 5px; height: 9px; }
.idblock { display: flex; height: 13px; border: 1px solid #3e3536; border-radius: 3px; background: #ffe5e5; overflow: hidden; }
.idblock .ico { height: 100%; border: 0; border-radius: 0; }
.idblock .wide { width: 80px; padding-left: 5px; }
.cell { display: flex; align-items: center; justify-content: center; width: 13px; border-left: 1px solid #8b7d7e; }
.cell:first-child { border-left: 0; }
.sel { appearance: none; height: 13px; padding: 0 10px 0 4px; border: 1px solid #2a2627; border-radius: 3px; color: #f7f4f4; text-shadow: 0 0 1px #fff; background: url("data:image/svg+xml,%3Csvg xmlns='http://www.w3.org/2000/svg' viewBox='0 0 6 12'%3E%3Cpath d='M3 1 5.600 5H.4zM3 11 .4 7h5.200z' fill='%23f4f4f4'/%3E%3C/svg%3E") right 2px center / 5px 9px no-repeat, linear-gradient(#333, #555); line-height: 11px; }
.strip { display: flex; height: 13px; border: 1px solid #4a4041; border-radius: 3px; background: #ffe5e5; overflow: hidden; }
.strip button { display: flex; align-items: center; justify-content: center; width: 13px; border-left: 1px solid #9b8b8c; }
.strip button:first-child { border-left: 0; width: 12px; }
.grey, .strip .grey { background: #9b8d8f; }

.infobar { height: 20px; padding-left: 5px; border-bottom: 1px solid #3a3536; }
.infomenus { width: 139px; gap: 9px; }
.infobar .idblock { margin-right: 3px; }
.engine { width: 74px; margin: 0 12px 0 6px; }
.logo { width: 12px; height: 12px; margin-right: 5px; }

/* main split */
.work { display: grid; grid-template-columns: minmax(0, 1fr) 277px; flex: 1; min-height: 0; }
.left { display: flex; flex-direction: column; min-width: 0; min-height: 0; border-right: 1px solid #282526; }
.upper { display: flex; flex: 1; min-height: 0; }
.shelf { display: flex; flex-direction: column; width: 106px; flex: none; background: #c8b5b7; border-right: 1px solid #a39597; }
.tools { display: flex; height: 440px; overflow: hidden; border-bottom: 1px solid #efdddd; flex: none; }
.toolcol { width: 90px; padding: 0 1px 0 5px; flex: none; }
.phead { position: relative; display: flex; align-items: center; gap: 3px; height: 16px; padding-left: 3px; font-size: 8px; white-space: nowrap; }
.tri { border: 3px solid transparent; border-top: 5px solid #2b2526; border-bottom: 0; }
.grip { width: 9px; height: 9px; margin-left: auto; background: repeating-linear-gradient(45deg, #b09fa1 0 1px, #dccbcc 1px 2px, transparent 2px 3px); clip-path: polygon(0 0, 100% 0, 100% 100%); }
.toolcol h3 { height: 16px; padding: 4px 0 0 5px; }
.phead + h3 { margin-top: 1px; }
.group { display: grid; grid-template-columns: 42px 1fr; grid-auto-rows: minmax(0, 1fr); gap: 1px; background: #8a7c7d; border: 1px solid #62575a; border-radius: 3px; overflow: hidden; }
.group > * { grid-column: span 2; width: 100%; height: 100%; padding-left: 4px; text-align: left; line-height: 12px; white-space: nowrap; }
.group button { background: linear-gradient(#ffe9e9, #fbdfe0); }
.group .half { grid-column: span 1; }
.group .sel { border: 0; border-radius: 0; }
.g2 { height: 28px; }
.g3 { height: 41px; }
.g5 { height: 68px; }
.g10 { height: 134px; }
.scroll { width: 8px; height: 436px; margin: 3px 0 0 5px; background: #817778; border: 1px solid #746869; border-radius: 4px; }
.thumb { height: 60%; border-radius: 4px; background: linear-gradient(90deg, #fff, #fadcdd); }
.operator { flex: 1; padding: 1px 0 0 5px; border-top: 1px solid #a79799; }

.viewport { position: relative; flex: 1; min-width: 0; background: #393939; overflow: hidden; }
.canvas { width: 100%; height: 100%; }
.vlabel { position: absolute; color: #fff; }
.vtop { top: 4px; left: 14px; }
.vbottom { bottom: 3px; left: 47px; }

.viewmenus { width: 83px; }
.viewbar > .ico { margin-right: 4px; width: 23px; }
.viewbar > .ico:first-child, .timebar > .ico:first-child { width: 21px; margin-right: 0; }
.mode { display: flex; align-items: center; width: 62px; height: 13px; margin-right: 4px; padding-left: 3px; background: #444; border: 1px solid #222; border-radius: 3px; }
.mode .sel { flex: 1; height: 11px; border: 0; background-color: transparent; padding-left: 3px; }
.manip { display: flex; height: 13px; margin: 0 4px 0 -1px; border: 1px solid #222; border-radius: 3px; background: #444; overflow: hidden; }
.manip button { display: grid; place-items: center; width: 13px; }
.manip .sel { height: 11px; width: 48px; border: 0; border-radius: 0; line-height: 10px; }
.on { background: #5b96f8; }
.viewbar .strip, .viewbar .idblock { margin-right: 4px; }

/* timeline */
.timeline { flex: none; border-top: 1px solid #2d292a; }
.frames { width: 100%; height: 33px; }
.numbers { display: flex; height: 10px; margin-left: 3px; padding-left: 5px; background: linear-gradient(#ffe6e6, #f5d4d5); border: 1px solid #8c7c7e; border-radius: 5px; overflow: hidden; line-height: 9px; white-space: nowrap; }
.numbers span { flex: 1 1 0; min-width: 0; text-align: center; }
.timemenus { width: 130px; }
.num { display: flex; align-items: center; height: 13px; padding: 0 5px; background: #ffe7e7; border: 1px solid #64585a; border-radius: 7px; overflow: hidden; }
.num::before, .num::after { content: "‹"; color: #99898a; }
.num::after { content: "›"; }
.num input { flex: 1; width: 0; text-align: center; }
.range { display: flex; margin: 0 3px; }
.range .num { width: 78px; border-radius: 7px 0 0 7px; }
.range .num + .num { width: 74px; border-left: 0; border-radius: 0 7px 7px 0; }
.current { width: 60px; margin-right: 9px; }
.play { margin-right: 4px; }
.play button { width: 13px; }
.strip .flip svg { rotate: 180deg; }
.sync { width: 76px; margin-right: 11px; }
.rec { margin-right: 3px; }
.keys input { width: 70px; }

/* right column */
.right { display: flex; flex-direction: column; min-width: 0; border-left: 1px solid #dac9ca; background: #c8b5b7; }
.outbar { height: 17px; border-top: 0; }
.outmenus { width: 58px; }
.scenes { width: 78px; margin-right: 4px; }
.search { display: flex; align-items: center; width: 70px; height: 12px; padding-left: 2px; background: #ffe5e5; border: 1px solid #5f5455; border-radius: 3px; }
.search input { width: 50px; }
.outliner { display: grid; grid-template-rows: repeat(6, minmax(0, 8fr)) minmax(0, 10fr); height: 97px; flex: none; }
.row { display: grid; grid-template-columns: minmax(0, 1fr) repeat(3, 13px); background: #cab6b8; }
.row:nth-child(odd) { background: #c1aeb0; }
.row b { display: grid; place-items: center; border-left: 1px solid #948688; overflow: hidden; }
.row:last-child { background: #cab6b8; }
.name { display: flex; align-items: center; gap: 2px; padding-left: 17px; white-space: nowrap; }
.name svg { width: 11px; height: 11px; }
.name .ex { width: 8px; height: 8px; }
.name.l0 { padding-left: 2px; }
.scene .name { background: linear-gradient(90deg, #cfe0ee, #b4cef3); }
.l0 .ex { margin-right: 2px; }
.name.l2 { padding-left: 27px; }
.name i { width: 1px; height: 8px; margin: 0 4px; background: #443b3c; }
.picked { color: #fff; }
.propbar { height: 16px; border-top: 1px solid #3b3536; }
.tabs { display: flex; height: 13px; margin-left: 4px; border: 1px solid #222; border-radius: 3px; overflow: hidden; background: #4a4546; }
.tabs button { display: grid; place-items: center; width: 13px; border-right: 1px solid #2c2829; }
.tabs .on { background: #5b96f8; }
.props { flex: 1; padding: 0 4px 0 5px; border-top: 1px solid #e9d8d9; }
.crumbs { display: flex; align-items: center; gap: 4px; height: 30px; padding: 0 0 6px 1px; }
.crumbs svg { width: 11px; height: 11px; }
.caret { margin: 0 5px 0 -2px; border: 2px solid transparent; border-left: 3px solid #2b2526; border-right: 0; }
.addmod { display: block; width: 100%; }
.modifier { margin-top: 3px; border: 1px solid #6b5f60; border-radius: 3px; background: #f0d3d5; }
.modhead { display: flex; align-items: center; height: 22px; padding: 0 4px; border-bottom: 1px solid #8f8082; }
.modhead input { flex: 1; height: 13px; margin: 0 6px 0 4px; padding-left: 4px; border: 1px solid #5f5455; border-radius: 3px; background: #ffe7e7; }
.modhead .subs { width: 12px; height: 12px; margin-left: 9px; }
.modhead .strip button { width: 17px; }
.modhead .round { margin: 0 7px 0 6px; border-radius: 5px; }
.modhead .round button { width: 15px; }
.modbody { padding: 4px 2px 6px; }
.pair { display: grid; grid-template-columns: 1fr 1fr; gap: 5px; }
.btn { height: 14px; border: 1px solid #62575a; border-radius: 4px; background: #ffe7e7; }
.toggle { display: grid; grid-template-columns: 1fr 1fr; height: 13px; margin-top: 5px; border: 1px solid #3b3536; border-radius: 3px; overflow: hidden; }
.toggle button { background: linear-gradient(#333, #505050); color: #fff; text-shadow: 0 0 1px #fff; line-height: 11px; }
.toggle .on { background: linear-gradient(#4f86f4, #69a2fb); color: #1b3568; text-shadow: none; }
.fields h3 { padding: 3px 5px 1px; }
.fields .num { height: 14px; margin-bottom: 1px; }
.check { display: flex; align-items: center; gap: 5px; height: 15px; padding-left: 2px; }
.check input { appearance: none; width: 9px; height: 9px; border-radius: 2px; background: #423d3e; }
.check input:checked { background: url("data:image/svg+xml,%3Csvg xmlns='http://www.w3.org/2000/svg' viewBox='0 0 9 9'%3E%3Cpath d='m2 4 2 3 4-6' stroke='white' stroke-width='1.500' fill='none'/%3E%3C/svg%3E") #423d3e; }
.pale { color: #fffafa; }

/* desktop panel */
.taskbar { display: flex; align-items: center; flex: none; height: 17px; padding: 0 2px 0 4px; background: linear-gradient(#4a4a4a, #303030); }
.taskbar, .taskbar button { color: #f0f0f0; font-size: 8px; white-space: nowrap; }
.taskbar button, .launch, .tray { display: flex; align-items: center; }
.taskbar svg { width: 12px; height: 12px; }
.start { gap: 3px; width: 43px; }
.taskbar .desk { width: 16px; height: 13px; }
.launch { gap: 3px; margin: 0 14px 0 11px; }
.taskbar .task { width: 100px; height: 15px; padding-left: 2px; gap: 1px; }
.taskbar .lit { border: 1px solid #777; background: #4d4d4d; margin-right: 3px; }
.tray { gap: 2px; margin-left: auto; }
.tray .big { width: 15px; height: 15px; }
.tray time { margin: 0 2px; }
```
